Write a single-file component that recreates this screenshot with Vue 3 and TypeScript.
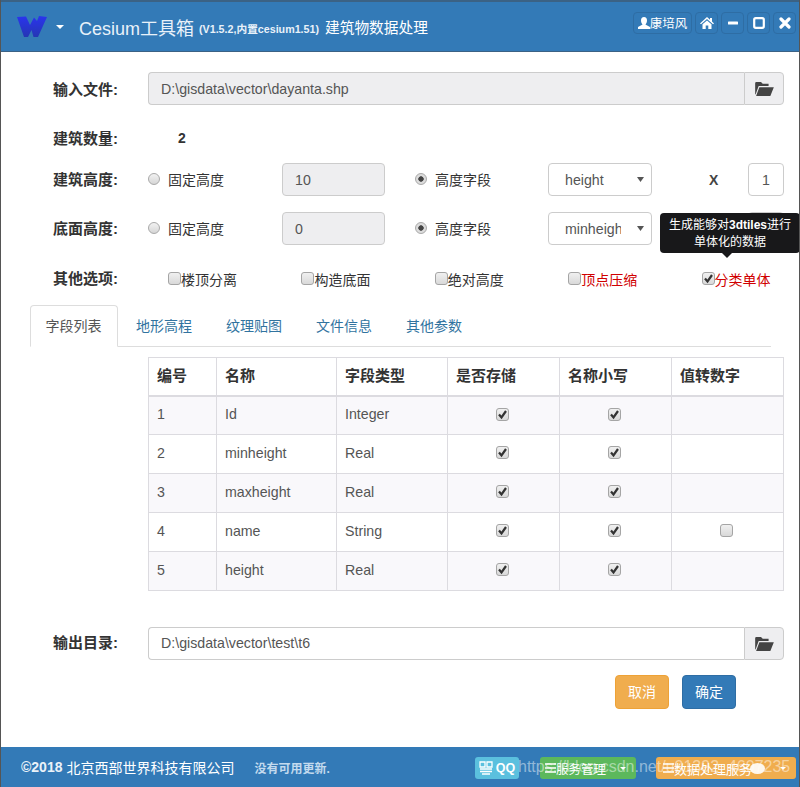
<script setup lang="ts">
interface Row { no: number; name: string; type: string; convert: boolean }
const rows: Row[] = [
  { no: 1, name: 'Id', type: 'Integer', convert: false },
  { no: 2, name: 'minheight', type: 'Real', convert: false },
  { no: 3, name: 'maxheight', type: 'Real', convert: false },
  { no: 4, name: 'name', type: 'String', convert: true },
  { no: 5, name: 'height', type: 'Real', convert: false },
]
const tabs = ['字段列表', '地形高程', '纹理贴图', '文件信息', '其他参数']
const options = [
  { text: '楼顶分离', checked: false, red: false },
  { text: '构造底面', checked: false, red: false },
  { text: '绝对高度', checked: false, red: false },
  { text: '顶点压缩', checked: false, red: true },
  { text: '分类单体', checked: true, red: true },
]
const heads = ['编号', '名称', '字段类型', '是否存储', '名称小写', '值转数字']
const folder = 'M1 13 L1 3 Q1 2 2 2 L6 2 L7.5 3.5 L12.5 3.5 L12.5 5.5 L4 5.5 L1.6 12 Z M4.6 6.5 L17 6.5 L14 14 L1.8 14 Z'
</script>

<template>
  <div class="app">
    <header class="top">
      <svg class="logo" viewBox="0 0 30 21" width="30" height="21">
        <defs>
          <linearGradient id="wg" x1="0" y1="0" x2="0" y2="1">
            <stop offset="0" stop-color="#2a34ee" />
            <stop offset="1" stop-color="#2536b4" />
          </linearGradient>
        </defs>
        <path d="M0 1 L9 0.5 L13 9 L17 1.5 L20 5 L22 0 L30 1 L21 21 L16.5 21 L14.5 14 L11 21 L7 21 Z" fill="url(#wg)" />
      </svg>
      <span class="caret"></span>
      <span class="title">Cesium工具箱</span>
      <span class="ver">(V1.5.2,内置cesium1.51)</span>
      <span class="sub">建筑物数据处理</span>
      <div class="win">
        <button class="wbtn user">
          <svg viewBox="0 0 12 12" width="12" height="12"><path d="M6 0 C8 0 9 1.5 9 3.5 C9 5.5 8 7 7.4 7.5 L12 10 L12 12 L0 12 L0 10 L4.6 7.5 C4 7 3 5.5 3 3.5 C3 1.5 4 0 6 0 Z" fill="#fff" /></svg>康培风
        </button>
        <button class="wbtn ic">
          <svg viewBox="0 0 14 12" width="14" height="12"><path d="M7 0 L10 2.7 L10 1 L12 1 L12 4.5 L14 6.4 L13 7.2 L7 2 L1 7.2 L0 6.4 Z M2.5 7.3 L7 3.4 L11.5 7.3 L11.5 12 L8.3 12 L8.3 8.5 L5.7 8.5 L5.7 12 L2.5 12 Z" fill="#fff" /></svg>
        </button>
        <button class="wbtn ic">
          <svg viewBox="0 0 12 12" width="12" height="12"><rect x="1" y="4.5" width="10" height="3" rx="0.6" fill="#fff" /></svg>
        </button>
        <button class="wbtn ic">
          <svg viewBox="0 0 12 12" width="12" height="12"><rect x="1.2" y="1.2" width="9.6" height="9.6" rx="1.5" fill="none" stroke="#fff" stroke-width="2.2" /></svg>
        </button>
        <button class="wbtn ic">
          <svg viewBox="0 0 12 12" width="12" height="12"><path d="M2 2 L10 10 M10 2 L2 10" stroke="#fff" stroke-width="3.2" stroke-linecap="round" /></svg>
        </button>
      </div>
    </header>

    <main class="body">
      <div class="file-row first">
        <label class="lbl">输入文件:</label>
        <div class="group">
          <input class="ctl grow" value="D:\gisdata\vector\dayanta.shp" disabled />
          <span class="addon"><svg viewBox="1 2 16 12" width="19" height="14"><path :d="folder" fill="#444" /></svg></span>
        </div>
      </div>

      <div class="count-row">
        <label class="lbl">建筑数量:</label>
        <b class="count">2</b>
      </div>

      <div class="grid-row">
        <label class="lbl">建筑高度:</label>
        <label class="rad"><input type="radio" name="a" class="radio" />固定高度</label>
        <input class="ctl" value="10" disabled />
        <span></span>
        <label class="rad"><input type="radio" name="a" class="radio" checked />高度字段</label>
        <select class="ctl sel"><option>height</option></select>
        <b class="x">X</b>
        <input class="ctl num" value="1" />
      </div>

      <div class="grid-row second">
        <label class="lbl">底面高度:</label>
        <label class="rad"><input type="radio" name="b" class="radio" />固定高度</label>
        <input class="ctl" value="0" disabled />
        <span></span>
        <label class="rad"><input type="radio" name="b" class="radio" checked />高度字段</label>
        <select class="ctl sel"><option>minheight</option></select>
        <span></span>
        <input class="ctl num" value="0" />
      </div>

      <div class="opt-row">
        <label class="lbl">其他选项:</label>
        <div class="opts">
          <label v-for="o in options" :key="o.text" class="opt" :class="{ red: o.red }">
            <input type="checkbox" class="cb" :checked="o.checked" />{{ o.text }}
          </label>
        </div>
        <div class="tip">
          生成能够对<b>3dtiles</b>进行<br />单体化的数据
        </div>
      </div>

      <nav class="tabs">
        <a v-for="(t, i) in tabs" :key="t" class="tab" :class="{ on: i === 0 }">{{ t }}</a>
      </nav>

      <table class="tbl">
        <colgroup>
          <col class="c1" /><col class="c2" /><col class="c3" />
          <col class="c4" /><col class="c4" /><col />
        </colgroup>
        <thead>
          <tr><th v-for="h in heads" :key="h">{{ h }}</th></tr>
        </thead>
        <tbody>
          <tr v-for="r in rows" :key="r.no">
            <td>{{ r.no }}</td>
            <td>{{ r.name }}</td>
            <td>{{ r.type }}</td>
            <td class="c"><input type="checkbox" class="cb" checked /></td>
            <td class="c"><input type="checkbox" class="cb" checked /></td>
            <td class="c"><input v-if="r.convert" type="checkbox" class="cb" /></td>
          </tr>
        </tbody>
      </table>

      <div class="file-row out">
        <label class="lbl">输出目录:</label>
        <div class="group">
          <input class="ctl grow white" value="D:\gisdata\vector\test\t6" />
          <span class="addon"><svg viewBox="1 2 16 12" width="19" height="14"><path :d="folder" fill="#444" /></svg></span>
        </div>
      </div>

      <div class="actions">
        <button class="btn warn">取消</button>
        <button class="btn prim">确定</button>
      </div>
    </main>

    <footer class="foot">
      <b class="copy">©2018</b><span class="corp">北京西部世界科技有限公司</span>
      <b class="upd">没有可用更新.</b>
      <div class="fbtns">
        <button class="fb qq">
          <svg viewBox="0 0 14 14" width="14" height="14"><path d="M1 1 H6 V6 H1 Z M8 1 H13 V6 H8 Z M1 8 H13 M1 10.5 H13 M3 13 H11" fill="none" stroke="#fff" stroke-width="1.3" /></svg><b>QQ</b>
        </button>
        <button class="fb green">
          <svg viewBox="0 0 11 10" width="11" height="10"><path d="M0 1 H11 M0 5 H11 M0 9 H11" stroke="#fff" stroke-width="1.7" /></svg><span class="t1">服务管理</span>
          <span class="mini"></span>
        </button>
        <button class="fb orange">
          <svg viewBox="0 0 11 10" width="11" height="10"><path d="M0 1 H11 M0 5 H11 M0 9 H11" stroke="#fff" stroke-width="1.7" /></svg><span class="t2">数据处理服务</span>
          <span class="blob"></span>
          <span class="mini"></span>
        </button>
      </div>
      <span class="mark">https://blog.csdn.net/u01392_4607235</span>
    </footer>
  </div>
</template>

<style>
html, body { margin: 0; background: #fff; }
</style>

<style scoped>
.app {
  width: 800px;
  height: 787px;
  box-sizing: border-box;
  display: flex;
  flex-direction: column;
  font-family: "Liberation Sans", "Noto Sans CJK SC", sans-serif;
  font-size: 14px;
  color: #333;
  border-left: 1px solid #555;
  border-right: 1px solid #555;
  position: relative;
  overflow: hidden;
}
.top {
  height: 52px;
  flex: none;
  box-sizing: border-box;
  background: #337ab7;
  border-top: 2px solid #3b6285;
  border-bottom: 1px solid #3b6285;
  margin: 0 -1px;
  display: flex;
  align-items: center;
  padding: 0 0 0 17px;
  color: #fff;
}
.logo { flex: none; margin-top: -1px; }
.caret {
  width: 0; height: 0; margin: 0 15px 0 9px;
  border-left: 4px solid transparent;
  border-right: 4px solid transparent;
  border-top: 4px solid #fff;
}
.title { font-size: 18px; color: #e8f1f9; }
.ver { font-size: 10.7px; font-weight: 700; margin: 3px 6px 0 5px; color: #e8f1f9; }
.sub { font-size: 14.7px; }
.win { margin-left: auto; display: flex; gap: 3px; padding-right: 4px; margin-top: -8px; }
.wbtn {
  height: 22px;
  box-sizing: border-box;
  padding: 0;
  border: 1px solid #2e6da4;
  border-radius: 4px;
  background: #337ab7;
  color: #fff;
  font: 12.5px "Liberation Sans", "Noto Sans CJK SC", sans-serif;
  display: flex;
  align-items: center;
  justify-content: center;
}
.wbtn.user { width: 59px; }
.wbtn.ic { width: 23px; }

.body { flex: 1; padding: 20px 15px 0 52px; position: relative; }
.lbl { font-weight: 700; color: #333; font-size: 15px; margin-bottom: 2px; }
.first .lbl { margin-bottom: 0; }
.out .lbl { margin-bottom: 4px; }
.file-row { display: flex; align-items: center; height: 33px; }
.file-row .lbl { width: 95px; flex: none; }
.group { flex: 1; display: flex; }
.ctl {
  box-sizing: border-box;
  height: 33px;
  width: 100%;
  min-width: 0;
  padding: 0 12px;
  border: 1px solid #ccc;
  border-radius: 4px;
  background: #fff;
  color: #555;
  font: 14.2px "Liberation Sans", sans-serif;
  outline: none;
}
.ctl:disabled { background: #eeeef0; }
.grow { flex: 1; border-radius: 4px 0 0 4px; border-right: 0; }
.addon {
  width: 40px;
  flex: none;
  box-sizing: border-box;
  border: 1px solid #ccc;
  border-radius: 0 4px 4px 0;
  background: #eeeef0;
  display: flex;
  align-items: center;
  justify-content: center;
}
.count-row { display: flex; align-items: center; height: 20px; margin-top: 23px; }
.count-row .lbl { width: 95px; }
.count { margin-left: 30px; font-size: 14px; }
.grid-row {
  display: grid;
  grid-template-columns: 95px 134px 103px 30px 133px 104px 96px 36px;
  align-items: center;
  height: 33px;
  margin-top: 15px;
}
.grid-row.second { margin-top: 16px; }
.rad { display: flex; align-items: center; color: #333; margin-bottom: 2px; }
.radio {
  appearance: none;
  width: 12px; height: 12px;
  margin: 0 8px 0 0;
  border: 1px solid #a9a9a9;
  border-radius: 50%;
  box-sizing: border-box;
  background: linear-gradient(#f2f2f2, #d6d6d6);
}
.radio:checked { background: radial-gradient(circle, #444 0 2.4px, #dcdcdc 3px); }
.sel {
  appearance: none;
  padding: 0 30px 0 16px;
  background: #fff url("data:image/svg+xml,%3Csvg xmlns='http://www.w3.org/2000/svg' width='7' height='5'%3E%3Cpath d='M0 0H7L3.5 5Z' fill='%23555'/%3E%3C/svg%3E") no-repeat right 7px center;
}
.x { padding-left: 57px; font-size: 14px; color: #444; }
.num { padding: 0; text-align: center; }
.opt-row { position: relative; display: flex; align-items: center; height: 20px; margin-top: 23px; }
.opt-row .lbl { width: 115px; flex: none; }
.opts { display: flex; }
.opt { width: 133.4px; display: flex; align-items: center; margin-top: 1px; }
.opt.red { color: #d00000; }
.cb {
  appearance: none;
  width: 13px; height: 13px;
  margin: 0;
  box-sizing: border-box;
  border: 1px solid #a5a5a5;
  border-radius: 3px;
  background: linear-gradient(#f0f0f0, #d9d9d9);
  vertical-align: middle;
}
.cb:checked {
  background: url("data:image/svg+xml,%3Csvg xmlns='http://www.w3.org/2000/svg' width='11' height='11'%3E%3Cpath d='M2 5.5L4.5 8.5L9 2' fill='none' stroke='%23333' stroke-width='2.2'/%3E%3C/svg%3E") center no-repeat, linear-gradient(#f0f0f0, #d9d9d9);
}
.tip {
  position: absolute;
  left: 607px;
  top: -55px;
  width: 140px;
  height: 40px;
  box-sizing: border-box;
  padding-top: 4px;
  border-radius: 4px;
  background: #18181a;
  color: #fff;
  text-align: center;
  font-size: 12px;
  line-height: 17px;
}
.tip::after {
  content: "";
  position: absolute;
  left: 62px;
  bottom: -5px;
  border-left: 5px solid transparent;
  border-right: 5px solid transparent;
  border-top: 5px solid #18181a;
}
.tabs {
  display: flex;
  gap: 2px;
  height: 42px;
  box-sizing: border-box;
  margin: 17px 13px 0 -23px;
  border-bottom: 1px solid #ddd;
}
.tab {
  height: 42px;
  box-sizing: border-box;
  padding: 10px 15px;
  border: 1px solid transparent;
  border-radius: 4px 4px 0 0;
  line-height: 20px;
  color: #31739f;
}
.tab.on { color: #555; background: #fff; border-color: #ddd #ddd #fff; padding: 10px 15.5px 10px 14.5px; }
.tbl {
  margin: 10px 0 0 95px;
  width: 636px;
  border-collapse: collapse;
  table-layout: fixed;
}
.c1 { width: 68px; }
.c2 { width: 120px; }
.c3 { width: 111px; }
.c4 { width: 112px; }
.tbl th, .tbl td {
  border: 1px solid #dcdbe0;
  padding: 0 8px;
  text-align: left;
  height: 39px;
  box-sizing: border-box;
  line-height: 20px;
}
.tbl th { height: 38px; font-weight: 700; font-size: 15px; color: #333; border-bottom-width: 2px; }
.tbl td { color: #555; padding-bottom: 2px; font-size: 14.2px; }
.tbl td.c { text-align: center; padding-right: 10px; padding-bottom: 5px; }
.tbl tbody tr:nth-child(odd) { background: #f9f8fb; }
.out { margin-top: 36px; }
.out .white { background: #fff; padding-bottom: 2px; }
.actions { display: flex; justify-content: flex-end; gap: 13px; margin: 15px 48px 0 0; }
.btn {
  width: 54px;
  height: 34px;
  padding: 0 0 2px;
  border-radius: 4px;
  color: #fff;
  font: 14px "Liberation Sans", "Noto Sans CJK SC", sans-serif;
}
.warn { background: #f0ad4e; border: 1px solid #eea236; }
.prim { background: #337ab7; border: 1px solid #2e6da4; }
.foot {
  height: 40px;
  flex: none;
  box-sizing: border-box;
  background: #337ab7;
  margin: 0 -1px;
  position: relative;
  display: flex;
  align-items: center;
  padding-left: 21px;
  color: #fff;
}
.copy { font-size: 14px; color: #eaf2f9; }
.corp { margin-left: 4px; font-size: 14px; }
.upd { margin-left: 20px; font-size: 12px; color: #c3daee; }
.fbtns { position: absolute; left: 475px; top: 10px; display: flex; }
.fb {
  height: 22px;
  padding: 0;
  border: 0;
  border-radius: 3px;
  color: #fff;
  font: 12.5px "Liberation Sans", "Noto Sans CJK SC", sans-serif;
  display: flex;
  align-items: center;
  position: relative;
}
.qq { width: 44px; background: #5bc0de; justify-content: center; gap: 3px; }
.green { width: 96px; margin-left: 21px; background: #5cb85c; padding-left: 5px; }
.orange { width: 140px; margin-left: 20px; background: #f0ad4e; padding-left: 7px; }
.t1 { width: 73px; text-align: left; }
.t2 { width: 100px; text-align: left; font-size: 13px; }
.blob {
  position: absolute;
  left: 94px;
  top: 6px;
  width: 15px;
  height: 11px;
  border-radius: 50%;
  background: #fff;
  opacity: 0.9;
}
.mini {
  position: absolute;
  right: 10px;
  top: 10px;
  width: 0; height: 0;
  border-left: 3px solid transparent;
  border-right: 3px solid transparent;
  border-top: 3px solid #fff;
}
.mark {
  position: absolute;
  left: 518px;
  top: 9px;
  font-size: 16px;
  line-height: 22px;
  color: rgba(255, 255, 255, 0.48);
  white-space: nowrap;
}
</style>
